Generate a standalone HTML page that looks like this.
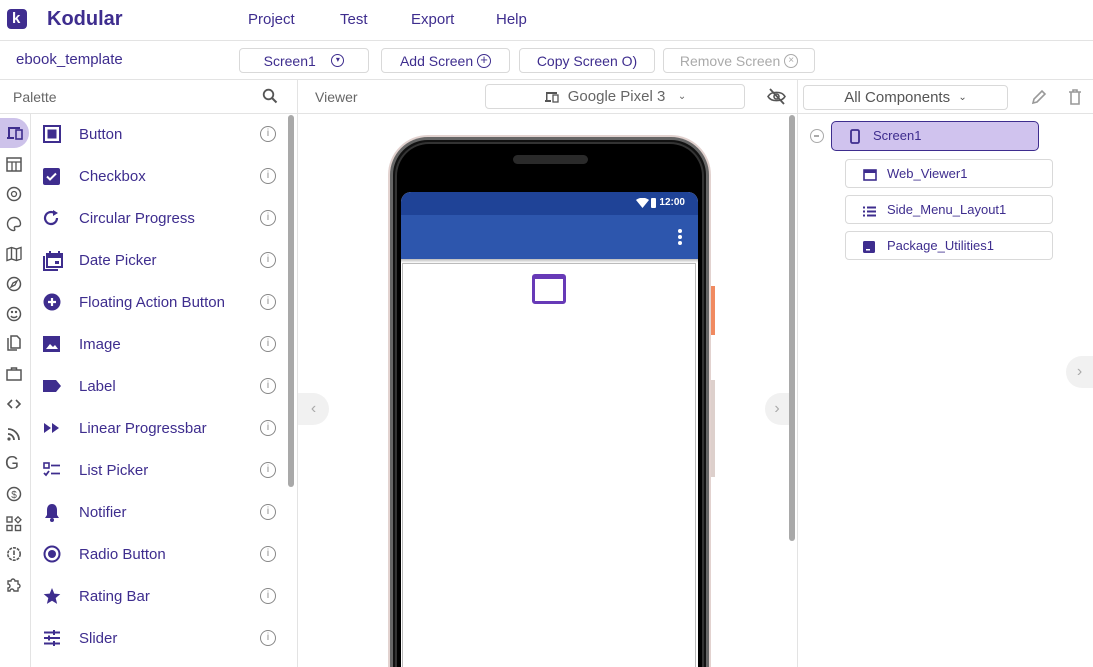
<!DOCTYPE html>
<html><head><meta charset="utf-8">
<style>
*{box-sizing:border-box;margin:0;padding:0}
html,body{width:1093px;height:667px;overflow:hidden}
body{background:#fff;font-family:"Liberation Sans",sans-serif;color:#3e2d8e;position:relative}
#w{position:absolute;left:0;top:0;width:1093px;height:667px;overflow:hidden}
.a{position:absolute}
.btn{position:absolute;border:1px solid #d9d9d9;border-radius:4px;font-size:14px;display:flex;align-items:center;justify-content:center;background:#fff}
.row{position:absolute;left:31px;width:257px;height:42px}
.row .t{position:absolute;left:48px;top:13px;font-size:15px}
.row svg.ic{position:absolute;left:12px;top:12px}
.row .i{position:absolute;left:229px;top:13px;width:16px;height:16px;border:1.3px solid #888;border-radius:50%;font-size:10px;color:#888;text-align:center;line-height:14px}
.side svg{position:absolute;left:6px}
.node{position:absolute;border:1px solid #d9d9d9;border-radius:4px;font-size:13px;height:29px;left:845px;width:208px}
.node span{position:absolute;left:41px;top:6px}
</style></head><body><div id="w">
<div class="a" style="left:7px;top:9px;width:20px;height:20px;background:#3f2d8f;border-radius:4px"><span style="position:absolute;left:5px;top:1px;color:#fff;font-weight:bold;font-size:15px">k</span></div>
<div class="a" style="left:47px;top:8px;font-size:20px;font-weight:bold;color:#3e2d8e">Kodular</div>
<div class="a" style="left:248px;top:11px;font-size:15px">Project</div>
<div class="a" style="left:340px;top:11px;font-size:15px">Test</div>
<div class="a" style="left:411px;top:11px;font-size:15px">Export</div>
<div class="a" style="left:496px;top:11px;font-size:15px">Help</div>
<div class="a" style="left:0;top:40px;width:1093px;height:1px;background:#e3e3e3"></div>
<div class="a" style="left:16px;top:51px;font-size:15px">ebook_template</div>
<div class="btn" style="left:239px;top:48px;width:130px;height:25px">Screen1&nbsp;&nbsp;&nbsp;&nbsp;<span style="display:inline-block;width:13px;height:13px;border:1.5px solid #3e2d8e;border-radius:50%;font-size:8px;line-height:10px;text-align:center">▾</span></div>
<div class="btn" style="left:381px;top:48px;width:129px;height:25px">Add Screen&nbsp;<span style="display:inline-block;width:14px;height:14px;border:1.5px solid #3e2d8e;border-radius:50%;font-size:13px;line-height:10px;text-align:center">+</span></div>
<div class="btn" style="left:519px;top:48px;width:136px;height:25px">Copy Screen O)</div>
<div class="btn" style="left:663px;top:48px;width:152px;height:25px;color:#aaa">Remove Screen&nbsp;<span style="display:inline-block;width:14px;height:14px;border:1.5px solid #aaa;border-radius:50%;font-size:10px;line-height:11px;text-align:center">×</span></div>
<div class="a" style="left:0;top:79px;width:1093px;height:1px;background:#e3e3e3"></div>
<div class="a" style="left:13px;top:89px;font-size:14px;color:#666">Palette</div>
<svg class="a" style="left:262px;top:88px" width="16" height="16" viewBox="0 0 16 16"><circle cx="6.5" cy="6.5" r="4.8" fill="none" stroke="#555" stroke-width="1.8"/><path d="M10 10l4.5 4.5" stroke="#555" stroke-width="2"/></svg>
<div class="a" style="left:0;top:113px;width:298px;height:1px;background:#e3e3e3"></div>
<div class="a" style="left:297px;top:80px;width:1px;height:587px;background:#e3e3e3"></div>
<div class="a" style="left:30px;top:114px;width:1px;height:553px;background:#e3e3e3"></div>
<div class="side">
<div class="a" style="left:0;top:118px;width:29px;height:30px;background:#cdc2ea;border-radius:0 15px 15px 0"></div>
<svg style="top:126px" width="18" height="14" viewBox="0 0 18 14"><path d="M2 1h12v2H4v8H2zM1 11h7v2H1z" fill="#3e2d8e"/><rect x="10" y="4" width="6" height="9" fill="none" stroke="#3e2d8e" stroke-width="1.6"/></svg>
<svg style="top:157px" width="16" height="16"><rect x="1" y="1" width="14" height="13" fill="none" stroke="#555" stroke-width="1.5"/><path d="M1 5h14M6 5v9M10 5v9" stroke="#555" stroke-width="1.3"/></svg>
<svg style="top:186px" width="16" height="16"><circle cx="8" cy="8" r="6.5" fill="none" stroke="#555" stroke-width="1.5"/><circle cx="8" cy="8" r="2.5" fill="none" stroke="#555" stroke-width="1.3"/></svg>
<svg style="top:216px" width="16" height="16"><path d="M8 1.5a6.5 6.5 0 1 0 0 13c1 0 1-1 .5-2s0-2 1.5-2h2a2.5 2.5 0 0 0 2.5-2.5C14.5 4 11.5 1.5 8 1.5z" fill="none" stroke="#555" stroke-width="1.4"/></svg>
<svg style="top:246px" width="16" height="16"><path d="M1 3l4.5-1.5 5 1.5 4.5-1.5v11.5l-4.5 1.5-5-1.5L1 14.5zM5.5 1.5v11.5M10.5 3v11.5" fill="none" stroke="#555" stroke-width="1.4"/></svg>
<svg style="top:276px" width="16" height="16"><circle cx="8" cy="8" r="6.5" fill="none" stroke="#555" stroke-width="1.5"/><path d="M11 5L9 9 5 11l2-4z" fill="none" stroke="#555" stroke-width="1.3"/></svg>
<svg style="top:306px" width="16" height="16"><circle cx="8" cy="8" r="6.5" fill="none" stroke="#555" stroke-width="1.5"/><circle cx="6" cy="6" r="1.2" fill="#555"/><circle cx="10" cy="6" r="1.2" fill="#555"/><path d="M5 10c1 2 5 2 6 0" stroke="#555" fill="none" stroke-width="1.4"/></svg>
<svg style="top:335px" width="16" height="17"><path d="M2 3v12h9M5 1h6l3 3v9H5z" fill="none" stroke="#555" stroke-width="1.5"/></svg>
<svg style="top:366px" width="16" height="16"><rect x="1" y="4" width="14" height="10" fill="none" stroke="#555" stroke-width="1.5"/><path d="M5.5 4V2h5v2" fill="none" stroke="#555" stroke-width="1.5"/></svg>
<svg style="top:396px" width="16" height="16"><path d="M6 4L2 8l4 4M10 4l4 4-4 4" fill="none" stroke="#555" stroke-width="1.6"/></svg>
<svg style="top:426px" width="16" height="16"><circle cx="3" cy="13" r="1.6" fill="#555"/><path d="M2 8a6 6 0 0 1 6 6M2 3a11 11 0 0 1 11 11" fill="none" stroke="#555" stroke-width="1.8"/></svg>
<div class="a" style="left:5px;top:453px;font-size:18px;color:#555">G</div>
<svg style="top:486px" width="16" height="16"><circle cx="8" cy="8" r="6.5" fill="none" stroke="#555" stroke-width="1.5"/><text x="8" y="12" font-size="10" text-anchor="middle" fill="#555" font-family="Liberation Sans">$</text></svg>
<svg style="top:516px" width="16" height="16"><rect x="1" y="1" width="5" height="5" fill="none" stroke="#555" stroke-width="1.4"/><rect x="1" y="9.5" width="5" height="5" fill="none" stroke="#555" stroke-width="1.4"/><rect x="9.5" y="9.5" width="5" height="5" fill="none" stroke="#555" stroke-width="1.4"/><path d="M12 0.8l3 3-3 3-3-3z" fill="none" stroke="#555" stroke-width="1.3"/></svg>
<svg style="top:546px" width="16" height="16"><circle cx="8" cy="8" r="6.2" fill="none" stroke="#555" stroke-width="1.6" stroke-dasharray="3 1"/><path d="M8 4.5v4.5M8 10.5v1.5" stroke="#555" stroke-width="1.6"/></svg>
<svg style="top:576px" width="16" height="16"><path d="M2 5h3a2 2 0 0 1 4 0h3v3a2 2 0 0 1 0 4v3H8a2 2 0 0 0-4 0H2v-3a2 2 0 0 0 0-4z" fill="none" stroke="#555" stroke-width="1.4"/></svg>
</div>
<div class="row" style="top:113px"><svg class="ic" width="18" height="18"><rect x="1" y="1" width="16" height="16" fill="none" stroke="#3e2d8e" stroke-width="2"/><rect x="4.5" y="4.5" width="9" height="9" fill="#3e2d8e"/></svg><span class="t">Button</span><span class="i">i</span></div>
<div class="row" style="top:155px"><svg class="ic" width="18" height="18"><rect x="0" y="1" width="17" height="17" rx="2" fill="#3e2d8e"/><path d="M4 9.5l3 3 6-6" stroke="#fff" stroke-width="2" fill="none"/></svg><span class="t">Checkbox</span><span class="i">i</span></div>
<div class="row" style="top:197px"><svg class="ic" width="18" height="18"><path d="M14 9A6 6 0 1 1 11 3.8" fill="none" stroke="#3e2d8e" stroke-width="2.2"/><path d="M10 1l5 3-5 3z" fill="#3e2d8e"/></svg><span class="t">Circular Progress</span><span class="i">i</span></div>
<div class="row" style="top:239px"><svg class="ic" width="20" height="20"><path d="M1 5v14h14" fill="none" stroke="#3e2d8e" stroke-width="2"/><rect x="4" y="3" width="15" height="13" fill="none" stroke="#3e2d8e" stroke-width="2"/><rect x="4" y="3" width="15" height="4" fill="#3e2d8e"/><rect x="6" y="0" width="2" height="4" fill="#3e2d8e"/><rect x="15" y="0" width="2" height="4" fill="#3e2d8e"/><rect x="12" y="10" width="4" height="3" fill="#3e2d8e"/></svg><span class="t">Date Picker</span><span class="i">i</span></div>
<div class="row" style="top:281px"><svg class="ic" width="18" height="18"><circle cx="9" cy="9" r="8.5" fill="#3e2d8e"/><path d="M9 5v8M5 9h8" stroke="#fff" stroke-width="2.2"/></svg><span class="t">Floating Action Button</span><span class="i">i</span></div>
<div class="row" style="top:323px"><svg class="ic" width="18" height="18"><rect x="0" y="1" width="17" height="16" fill="#3e2d8e"/><path d="M3 14l4-5 3 3 2-2 3 4z" fill="#fff"/></svg><span class="t">Image</span><span class="i">i</span></div>
<div class="row" style="top:365px"><svg class="ic" width="20" height="18"><path d="M0 3h13l5 6-5 6H0z" fill="#3e2d8e"/></svg><span class="t">Label</span><span class="i">i</span></div>
<div class="row" style="top:407px"><svg class="ic" width="18" height="18"><path d="M1 4l7 5-7 5zM9 4l7 5-7 5z" fill="#3e2d8e"/></svg><span class="t">Linear Progressbar</span><span class="i">i</span></div>
<div class="row" style="top:449px"><svg class="ic" width="18" height="18"><rect x="1" y="2" width="5" height="5" fill="none" stroke="#3e2d8e" stroke-width="1.6"/><path d="M8 4.5h9M8 12.5h9M1 12l2 2 3-4" stroke="#3e2d8e" stroke-width="1.8" fill="none"/></svg><span class="t">List Picker</span><span class="i">i</span></div>
<div class="row" style="top:491px"><svg class="ic" width="18" height="20"><path d="M9 1c-3.5 0-5 3-5 6v5l-2 3h14l-2-3V7c0-3-1.5-6-5-6z" fill="#3e2d8e"/><circle cx="9" cy="17" r="2" fill="#3e2d8e"/></svg><span class="t">Notifier</span><span class="i">i</span></div>
<div class="row" style="top:533px"><svg class="ic" width="18" height="18"><circle cx="9" cy="9" r="7.5" fill="none" stroke="#3e2d8e" stroke-width="2"/><circle cx="9" cy="9" r="4" fill="#3e2d8e"/></svg><span class="t">Radio Button</span><span class="i">i</span></div>
<div class="row" style="top:575px"><svg class="ic" width="18" height="18"><path d="M9 1l2.3 5.6 6 .5-4.6 3.9 1.4 5.9L9 13.8 3.9 16.9l1.4-5.9L.7 7.1l6-.5z" fill="#3e2d8e"/></svg><span class="t">Rating Bar</span><span class="i">i</span></div>
<div class="row" style="top:617px"><svg class="ic" width="18" height="18"><path d="M1 3.5h16M1 9h16M1 14.5h16" stroke="#3e2d8e" stroke-width="2"/><path d="M11 1v5M6 6.5v5M11 12v5" stroke="#3e2d8e" stroke-width="2"/></svg><span class="t">Slider</span><span class="i">i</span></div>
<div class="a" style="left:288px;top:115px;width:6px;height:372px;background:#a9a9a9;border-radius:3px"></div>
<div class="a" style="left:315px;top:89px;font-size:14px;color:#666">Viewer</div>
<div class="btn" style="left:485px;top:84px;width:260px;height:25px;color:#666;font-size:15px"><svg width="16" height="12" style="margin-right:8px"><path d="M2 1h11v2H3.5v6H2zM1 9h6v2H1z" fill="#555"/><rect x="9" y="4" width="5" height="7" fill="none" stroke="#555" stroke-width="1.3"/></svg>Google Pixel 3&nbsp;&nbsp;&nbsp;<span style="font-size:10px">⌄</span></div>
<svg class="a" style="left:767px;top:88px" width="19" height="17"><path d="M1 8.5C4 3 15 3 18 8.5 15 14 4 14 1 8.5z" fill="none" stroke="#555" stroke-width="1.6"/><circle cx="9.5" cy="8.5" r="2.5" fill="none" stroke="#555" stroke-width="1.6"/><path d="M3 1l14 15" stroke="#555" stroke-width="1.8"/></svg>
<div class="a" style="left:298px;top:113px;width:500px;height:1px;background:#e3e3e3"></div>
<div class="a" style="left:797px;top:80px;width:1px;height:587px;background:#e3e3e3"></div>
<div class="a" style="left:711px;top:286px;width:4px;height:49px;background:#f08a60"></div>
<div class="a" style="left:711px;top:380px;width:4px;height:97px;background:#ddd0cc"></div>
<div class="a" style="left:388px;top:135px;width:323px;height:532px;background:#e2d2cf;border-radius:40px 40px 0 0"></div>
<div class="a" style="left:390px;top:137px;width:319px;height:530px;background:#111;border-radius:38px 38px 0 0;border:3px solid #666;border-bottom:none"></div>
<div class="a" style="left:395px;top:142px;width:309px;height:525px;background:#000;border-radius:34px 34px 0 0;border:2px solid #333;border-bottom:none"></div>
<div class="a" style="left:513px;top:155px;width:75px;height:9px;background:#2a2a2a;border-radius:5px"></div>
<div class="a" style="left:401px;top:192px;width:297px;height:475px;background:#fff;border-radius:10px 10px 0 0;overflow:hidden">
  <div style="height:23px;background:#1f4397;position:relative"><span style="position:absolute;right:13px;top:5px;color:#fff;font-size:10px;font-weight:bold">12:00</span>
   <svg style="position:absolute;right:42px;top:6px" width="20" height="11"><path d="M0 2C4-1 9-1 13 2L6.5 10z" fill="#fff"/><rect x="15" y="0" width="5" height="10" rx="1" fill="#fff"/></svg></div>
  <div style="height:44px;background:#2d56ad;position:relative"><div style="position:absolute;right:16px;top:14px;width:4px">
   <div style="width:4px;height:4px;background:#fff;border-radius:2px;margin-bottom:2px"></div><div style="width:4px;height:4px;background:#fff;border-radius:2px;margin-bottom:2px"></div><div style="width:4px;height:4px;background:#fff;border-radius:2px"></div></div></div>
  <div style="height:4px;background:linear-gradient(#bbb,#fff)"></div>
  <div style="position:absolute;left:1px;top:71px;width:294px;height:420px;border:1px solid #bbb"></div>
  <div style="position:absolute;left:131px;top:82px;width:34px;height:30px;border:3px solid #673ab7;border-top-width:5px;border-radius:3px"></div>
</div>
<div class="a" style="left:789px;top:115px;width:6px;height:426px;background:#a9a9a9;border-radius:3px"></div>
<div class="a" style="left:298px;top:393px;width:31px;height:32px;background:#f1f1f1;border-radius:0 16px 16px 0;color:#aaa;font-size:16px;text-align:center;line-height:31px">‹</div>
<div class="a" style="left:765px;top:393px;width:24px;height:32px;background:#f1f1f1;border-radius:16px 0 0 16px;color:#aaa;font-size:16px;text-align:center;line-height:31px">›</div>
<div class="btn" style="left:803px;top:85px;width:205px;height:25px;color:#555;font-size:15px">All Components&nbsp;&nbsp;<span style="font-size:10px">⌄</span></div>
<svg class="a" style="left:1031px;top:89px" width="16" height="16"><path d="M2 14l1-4 8-8 3 3-8 8z" fill="none" stroke="#999" stroke-width="1.6"/></svg>
<svg class="a" style="left:1068px;top:89px" width="14" height="16"><path d="M1 3h12M5 3V1h4v2M3 3v12h8V3" fill="none" stroke="#999" stroke-width="1.6"/></svg>
<div class="a" style="left:798px;top:113px;width:295px;height:1px;background:#e3e3e3"></div>
<div class="a" style="left:810px;top:129px;width:14px;height:14px;border:1.5px solid #aaa;border-radius:50%"><div style="position:absolute;left:3px;top:5px;width:5px;height:1.5px;background:#aaa"></div></div>
<div class="a" style="left:831px;top:121px;width:208px;height:30px;background:#d0c3ee;border:1px solid #3e2d8e;border-radius:5px;font-size:13px"><svg style="position:absolute;left:18px;top:7px" width="10" height="15"><rect x="1" y="1" width="8" height="13" rx="1.5" fill="none" stroke="#3e2d8e" stroke-width="1.8"/></svg><span style="position:absolute;left:41px;top:6px">Screen1</span></div>
<div class="node" style="top:159px"><svg style="position:absolute;left:17px;top:9px" width="14" height="12"><rect x="1" y="1" width="12" height="10" fill="none" stroke="#3e2d8e" stroke-width="1.6"/><rect x="1" y="1" width="12" height="3" fill="#3e2d8e"/></svg><span>Web_Viewer1</span></div>
<div class="node" style="top:195px"><svg style="position:absolute;left:17px;top:10px" width="13" height="11"><path d="M0 1.5h2M4 1.5h9M0 5.5h2M4 5.5h9M0 9.5h2M4 9.5h9" stroke="#3e2d8e" stroke-width="2"/></svg><span>Side_Menu_Layout1</span></div>
<div class="node" style="top:231px"><svg style="position:absolute;left:17px;top:9px" width="12" height="12"><rect x="0" y="0" width="12" height="12" rx="1.5" fill="#3e2d8e"/><rect x="3" y="8" width="4" height="1.5" fill="#fff"/></svg><span>Package_Utilities1</span></div>
<div class="a" style="left:1066px;top:356px;width:27px;height:32px;background:#f1f1f1;border-radius:16px 0 0 16px;color:#aaa;font-size:16px;text-align:center;line-height:31px">›</div>
</div></body></html>
